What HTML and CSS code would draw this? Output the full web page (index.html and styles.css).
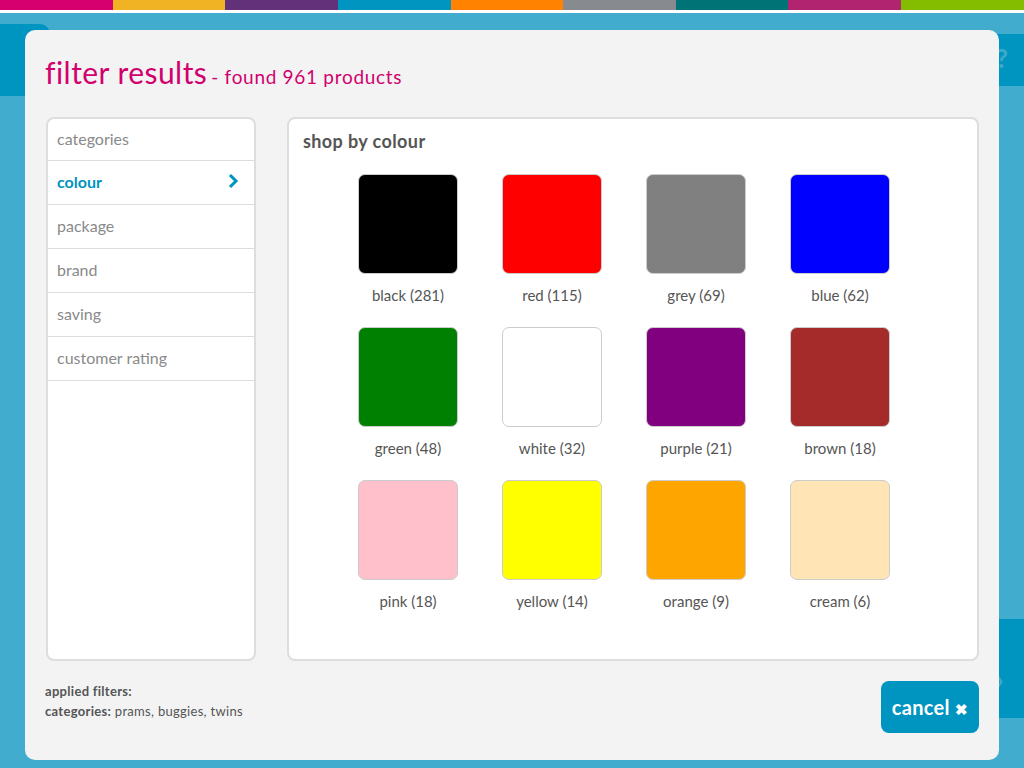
FILE: index.html
```html
<!DOCTYPE html>
<html lang="en">
<head>
<meta charset="utf-8">
<title>filter results</title>
<link rel="stylesheet" href="styles.css">
</head>
<body>
<div class="stripe">
  <span class="s1"></span><span class="s2"></span><span class="s3"></span><span class="s4"></span><span class="s5"></span><span class="s6"></span><span class="s7"></span><span class="s8"></span><span class="s9"></span>
</div>
<div class="page">
  <div class="tile tile-left"></div>
  <div class="tile tile-right-top"><span class="faint">?</span></div>
  <div class="tile tile-right-bottom"><span class="faint">&#8250;</span></div>

  <div class="modal">
    <h1 class="title">filter results<span class="found">- found 961 products</span></h1>
    <div class="body">
      <ul class="menu">
        <li class="menu-item">categories</li>
        <li class="menu-item active">colour
          <svg class="chev" width="12" height="16" viewBox="0 0 12 16"><polyline points="3,2 9,8 3,14" fill="none" stroke="#0094c0" stroke-width="3"/></svg>
        </li>
        <li class="menu-item">package</li>
        <li class="menu-item">brand</li>
        <li class="menu-item">saving</li>
        <li class="menu-item">customer rating</li>
      </ul>
      <div class="panel">
        <h2 class="panel-title">shop by colour</h2>
        <div class="swatches">
          <div class="sw"><div class="box" style="background:#000000"></div><div class="lbl">black (281)</div></div>
          <div class="sw"><div class="box" style="background:#ff0000"></div><div class="lbl">red (115)</div></div>
          <div class="sw"><div class="box" style="background:#808080"></div><div class="lbl">grey (69)</div></div>
          <div class="sw"><div class="box" style="background:#0000ff"></div><div class="lbl">blue (62)</div></div>
          <div class="sw"><div class="box" style="background:#008000"></div><div class="lbl">green (48)</div></div>
          <div class="sw"><div class="box" style="background:#ffffff"></div><div class="lbl">white (32)</div></div>
          <div class="sw"><div class="box" style="background:#800080"></div><div class="lbl">purple (21)</div></div>
          <div class="sw"><div class="box" style="background:#a52a2a"></div><div class="lbl">brown (18)</div></div>
          <div class="sw"><div class="box" style="background:#ffc0cb"></div><div class="lbl">pink (18)</div></div>
          <div class="sw"><div class="box" style="background:#ffff00"></div><div class="lbl">yellow (14)</div></div>
          <div class="sw"><div class="box" style="background:#ffa500"></div><div class="lbl">orange (9)</div></div>
          <div class="sw"><div class="box" style="background:#ffe4b5"></div><div class="lbl">cream (6)</div></div>
        </div>
      </div>
    </div>
    <div class="footer">
      <div class="applied">
        <div class="applied-head">applied filters:</div>
        <div><b>categories:</b> prams, buggies, twins</div>
      </div>
      <button class="cancel">cancel <span class="x">&#10006;</span></button>
    </div>
  </div>
</div>
</body>
</html>
```
FILE: styles.css
```css
* { box-sizing: border-box; }
html, body { margin: 0; padding: 0; }
body {
  width: 1024px;
  height: 768px;
  overflow: hidden;
  background: #42acce;
  font-family: Lato, "Open Sans", sans-serif;
}
.stripe {
  display: flex;
  height: 10px;
  border-bottom: 3px solid #ffffff;
  box-sizing: content-box;
}
.stripe span { width: 11%; flex: none; }
.stripe span.s9 { flex: 1; }
.s1 { background: #d6006f; }
.s2 { background: #f0b323; }
.s3 { background: #63307a; }
.s4 { background: #0094c0; }
.s5 { background: #ff8200; }
.s6 { background: #878a8f; }
.s7 { background: #007377; }
.s8 { background: #b1246f; }
.s9 { background: #84bd00; }

.page {
  position: relative;
  height: 755px;
  background: #42acce;
}
.tile {
  position: absolute;
  background: #0094c0;
}
.tile-left {
  left: 0; top: 11px; width: 50px; height: 72px;
  border-top-right-radius: 10px;
}
.tile-right-top {
  left: 990px; top: 21px; width: 40px; height: 52px;
}
.tile-right-bottom {
  left: 990px; top: 606px; width: 40px; height: 99px;
}
.faint {
  position: absolute;
  left: 6px;
  color: #3ea9cb;
  font-weight: 700;
  font-size: 26px;
}
.tile-right-top .faint { top: 8px; }
.tile-right-bottom .faint { top: 44px; }

.modal {
  position: absolute;
  left: 25px;
  top: 17px;
  width: 974px;
  height: 730px;
  background: #f3f3f3;
  border-radius: 10px;
  padding: 20px 20px 27px 20px;
  display: flex;
  flex-direction: column;
}
.title {
  margin: 0;
  height: 67px;
  font-weight: 400;
  font-size: 30px;
  line-height: 45px;
  color: #d1006e;
  letter-spacing: 0.45px;
}
.found {
  font-size: 19px;
  letter-spacing: 0.7px;
  margin-left: 4px;
}
.body {
  display: flex;
  gap: 31px;
  height: 544px;
  padding-left: 1px;
}
.menu {
  list-style: none;
  margin: 0;
  padding: 0;
  width: 210px;
  background: #ffffff;
  border: 2px solid #dddddd;
  border-radius: 8px;
}
.menu-item {
  height: 44px;
  border-bottom: 1px solid #dddddd;
  padding: 0 0 3px 9px;
  display: flex;
  align-items: center;
  justify-content: space-between;
  font-size: 16px;
  color: #8a8a8a;
}
.menu-item:first-child { height: 42px; }
.menu-item.active {
  color: #0094c0;
  font-weight: 700;
}
.chev { margin-right: 15px; }

.panel {
  flex: 1;
  background: #ffffff;
  border: 2px solid #dddddd;
  border-radius: 8px;
  padding: 11px 14px 12px;
}
.panel-title {
  margin: 0;
  font-size: 18px;
  letter-spacing: 0.4px;
  font-weight: 700;
  color: #555555;
  line-height: 23px;
}
.swatches {
  display: grid;
  grid-template-columns: repeat(4, 144px);
  margin-top: 21px;
  margin-left: 33px;
}
.sw {
  display: flex;
  flex-direction: column;
  align-items: center;
  height: 153px;
}
.box {
  width: 100px;
  height: 100px;
  border: 1px solid #cccccc;
  border-radius: 7px;
}
.lbl {
  margin-top: 11px;
  font-size: 15px;
  line-height: 20px;
  color: #555555;
}
.footer {
  flex: 1;
  display: flex;
  justify-content: space-between;
  align-items: flex-start;
  padding-top: 20px;
}
.applied {
  font-size: 13px;
  letter-spacing: 0.3px;
  color: #555555;
  line-height: 20px;
}
.applied b, .applied-head { font-weight: 700; }
.cancel {
  width: 98px;
  height: 52px;
  background: #0094c0;
  color: #ffffff;
  border: none;
  border-radius: 8px;
  font-family: Lato, "Open Sans", sans-serif;
  font-weight: 700;
  font-size: 20px;
  letter-spacing: 0.3px;
  padding: 0;
}
.cancel .x { font-size: 15px; }
```
